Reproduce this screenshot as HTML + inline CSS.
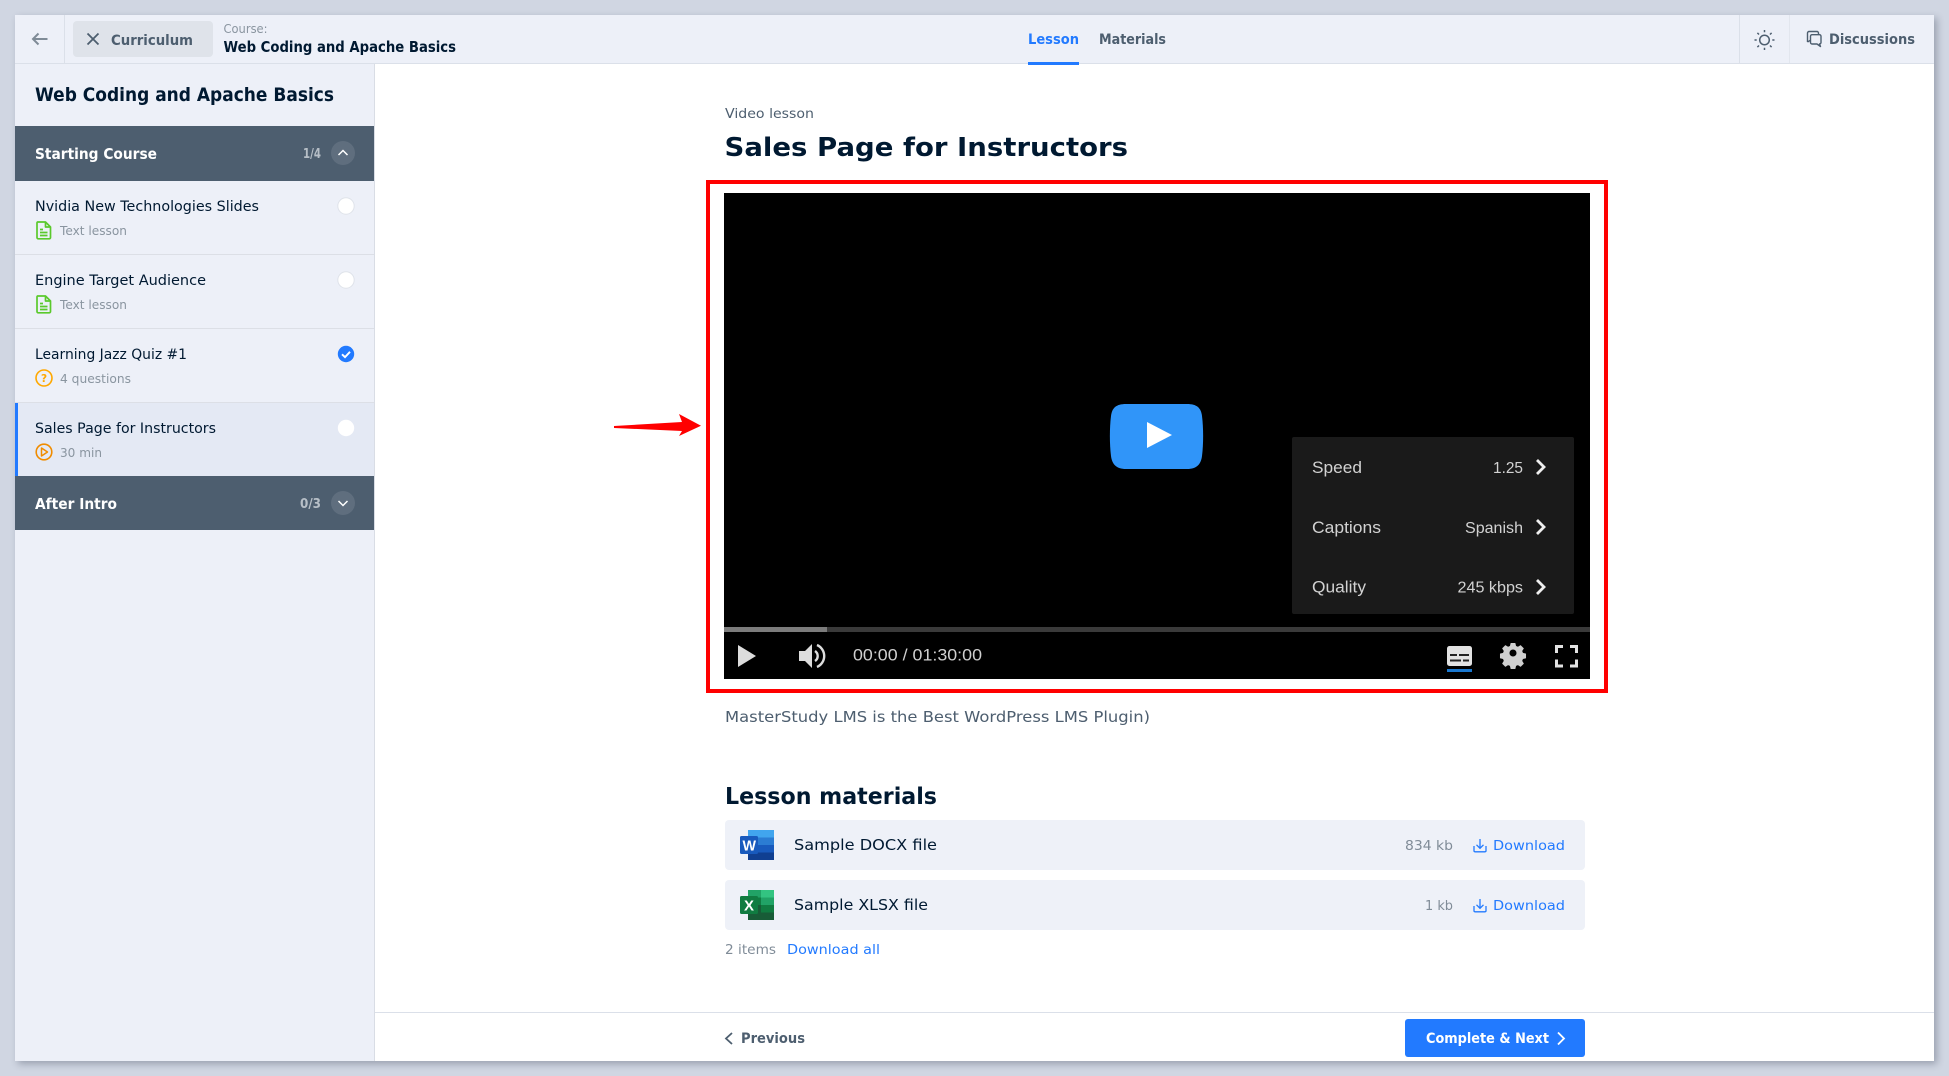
<!DOCTYPE html>
<html lang="en">
<head>
<meta charset="utf-8">
<title>Sales Page for Instructors</title>
<style>
html,body{margin:0;padding:0;width:1949px;height:1076px;overflow:hidden;background:#d0d6e2}
#app{position:absolute;left:15px;top:15px;width:1919px;height:1046px;background:#fff;box-shadow:3px 3px 7px rgba(40,50,70,.32)}
svg{position:absolute;left:0;top:0}
text{font-family:"DejaVu Sans","Liberation Sans",sans-serif;white-space:pre}
.b{font-weight:700}
.v{font-family:"Liberation Sans",sans-serif}
</style>
</head>
<body>
<div id="app"></div>
<svg width="1949" height="1076" viewBox="0 0 1949 1076" xmlns="http://www.w3.org/2000/svg">
<!-- header -->
<rect x="15" y="15" width="1919" height="48" fill="#edf0f8"/>
<rect x="15" y="63" width="1919" height="1" fill="#dbe0e9"/>
<rect x="64" y="15" width="1" height="48" fill="#dbe0e9"/>
<path d="M47.500 39H33M38.500 33.500L33 39L38.500 44.500" fill="none" stroke="#7f8b97" stroke-width="2"/>
<rect x="73" y="21" width="140" height="36" rx="4" fill="#dfe3ea"/>
<path d="M87.500 33.500L98.500 44.500M98.500 33.500L87.500 44.500" stroke="#4d5e6f" stroke-width="1.800" fill="none"/>
<text x="111" y="45" font-size="14.500" class="b" fill="#4d5e6f" textLength="82" lengthAdjust="spacingAndGlyphs">Curriculum</text>
<text x="223.500" y="33" font-size="12.500" fill="#8a95a0" textLength="44" lengthAdjust="spacingAndGlyphs">Course:</text>
<text x="223.500" y="52" font-size="15" class="b" fill="#001931" textLength="232.500" lengthAdjust="spacingAndGlyphs">Web Coding and Apache Basics</text>
<text x="1028" y="44" font-size="14.500" class="b" fill="#227aff" textLength="51" lengthAdjust="spacingAndGlyphs">Lesson</text>
<rect x="1028" y="62" width="51" height="3" fill="#227aff"/>
<text x="1099" y="44" font-size="14.500" class="b" fill="#4d5e6f" textLength="67" lengthAdjust="spacingAndGlyphs">Materials</text>
<rect x="1739" y="15" width="1" height="48" fill="#dbe0e9"/>
<rect x="1789" y="15" width="1" height="48" fill="#e2e6ee"/>
<g fill="none" stroke="#4d5e6f" stroke-width="1.500">
<circle cx="1764.500" cy="40" r="4.800"/>
<path d="M1764.500 30v2.200M1764.500 47.800v2.200M1754.500 40h2.200M1772.300 40h2.200M1757.400 32.900l1.600 1.600M1770 45.500l1.600 1.600M1771.600 32.900l-1.600 1.600M1759 45.500l-1.600 1.600"/>
</g>
<g fill="none" stroke="#4d5e6f" stroke-width="1.400" stroke-linejoin="round">
<path d="M1807.500 42V33a1.500 1.500 0 0 1 1.500-1.500h8a1.500 1.500 0 0 1 1.500 1.500v1.500"/>
<path d="M1812 34.700h7.500a1.500 1.500 0 0 1 1.500 1.500v6.300a1.500 1.500 0 0 1-1.500 1.500v0l1 2.500-3.500-2.500H1812a1.500 1.500 0 0 1-1.500-1.500v-6.300a1.500 1.500 0 0 1 1.500-1.500z"/>
<path d="M1807.500 42l3-1.800"/>
</g>
<text x="1829" y="44" font-size="14.500" class="b" fill="#4d5e6f" textLength="86" lengthAdjust="spacingAndGlyphs">Discussions</text>

<!-- sidebar -->
<rect x="15" y="64" width="359" height="997" fill="#edf0f8"/>
<rect x="374" y="64" width="1" height="997" fill="#d9dde5"/>
<text x="35" y="101" font-size="19" class="b" fill="#001931" textLength="299" lengthAdjust="spacingAndGlyphs">Web Coding and Apache Basics</text>

<rect x="15" y="126" width="359" height="55" fill="#4d5e6f"/>
<text x="35" y="159" font-size="15" class="b" fill="#fff" textLength="122" lengthAdjust="spacingAndGlyphs">Starting Course</text>
<text x="303" y="158" font-size="13.500" class="b" fill="#b7bfc7" textLength="18" lengthAdjust="spacingAndGlyphs">1/4</text>
<circle cx="343" cy="153" r="12" fill="#5f6e7e"/>
<path d="M338.500 155l4.500-4.500 4.500 4.500" fill="none" stroke="#fff" stroke-width="1.500"/>

<rect x="15" y="254" width="359" height="1" fill="#dcdfe6"/>
<rect x="15" y="328" width="359" height="1" fill="#dcdfe6"/>
<rect x="15" y="402" width="359" height="1" fill="#dcdfe6"/>

<!-- item 1 -->
<text x="35" y="211" font-size="14.500" fill="#001931" textLength="224" lengthAdjust="spacingAndGlyphs">Nvidia New Technologies Slides</text>
<circle cx="346" cy="206" r="8.200" fill="#fff" stroke="#dfe3ea" stroke-width="1"/>
<g fill="none" stroke="#5ac92c" stroke-width="1.700" stroke-linejoin="round">
<path d="M37.500 222h8l5 5v10.500a1.300 1.300 0 0 1-1.300 1.300H38.300a1.300 1.300 0 0 1-1.300-1.300V223a1 1 0 0 1 .5-1z"/>
<path d="M45.500 222v5h5M40 229.500h3M40 232.500h7.500M40 235.500h7.500"/>
</g>
<text x="60" y="235" font-size="12.500" fill="#8a95a0" textLength="67" lengthAdjust="spacingAndGlyphs">Text lesson</text>

<!-- item 2 -->
<text x="35" y="285" font-size="14.500" fill="#001931" textLength="171" lengthAdjust="spacingAndGlyphs">Engine Target Audience</text>
<circle cx="346" cy="280" r="8.200" fill="#fff" stroke="#dfe3ea" stroke-width="1"/>
<g fill="none" stroke="#5ac92c" stroke-width="1.700" stroke-linejoin="round" transform="translate(0 74)">
<path d="M37.500 222h8l5 5v10.500a1.300 1.300 0 0 1-1.300 1.300H38.300a1.300 1.300 0 0 1-1.300-1.300V223a1 1 0 0 1 .5-1z"/>
<path d="M45.500 222v5h5M40 229.500h3M40 232.500h7.500M40 235.500h7.500"/>
</g>
<text x="60" y="309" font-size="12.500" fill="#8a95a0" textLength="67" lengthAdjust="spacingAndGlyphs">Text lesson</text>

<!-- item 3 -->
<text x="35" y="359" font-size="14.500" fill="#001931" textLength="152" lengthAdjust="spacingAndGlyphs">Learning Jazz Quiz #1</text>
<circle cx="346" cy="354" r="8.200" fill="#227aff"/>
<path d="M342 354.300l3 2.800 5-5.300" fill="none" stroke="#fff" stroke-width="1.900"/>
<circle cx="44" cy="378" r="8" fill="none" stroke="#ffa800" stroke-width="1.600"/>
<text x="41" y="382" font-size="10.500" class="b" fill="#ffa800">?</text>
<text x="60" y="383" font-size="12.500" fill="#8a95a0" textLength="71" lengthAdjust="spacingAndGlyphs">4 questions</text>

<!-- item 4 -->
<rect x="15" y="403" width="359" height="73" fill="#e4e9f4"/>
<rect x="15" y="403" width="3" height="73" fill="#227aff"/>
<text x="35" y="433" font-size="14.500" fill="#001931" textLength="181" lengthAdjust="spacingAndGlyphs">Sales Page for Instructors</text>
<circle cx="346" cy="428" r="8.200" fill="#fff"/>
<circle cx="44" cy="452" r="7.800" fill="none" stroke="#f08c00" stroke-width="1.600"/>
<path d="M41.500 448l6 4-6 4z" fill="none" stroke="#f08c00" stroke-width="1.500" stroke-linejoin="round"/>
<text x="60" y="457" font-size="12.500" fill="#8a95a0" textLength="42" lengthAdjust="spacingAndGlyphs">30 min</text>

<rect x="15" y="476" width="359" height="54" fill="#4d5e6f"/>
<text x="35" y="509" font-size="15" class="b" fill="#fff" textLength="82" lengthAdjust="spacingAndGlyphs">After Intro</text>
<text x="300" y="508" font-size="13.500" class="b" fill="#b7bfc7" textLength="21" lengthAdjust="spacingAndGlyphs">0/3</text>
<circle cx="343" cy="503" r="12" fill="#5f6e7e"/>
<path d="M338.500 501l4.500 4.500 4.500-4.500" fill="none" stroke="#fff" stroke-width="1.500"/>

<!-- main -->
<text x="725" y="118" font-size="13.500" fill="#4d5e6f" textLength="89" lengthAdjust="spacingAndGlyphs">Video lesson</text>
<text x="724.500" y="156" font-size="25.500" class="b" fill="#001931" textLength="403.500" lengthAdjust="spacingAndGlyphs">Sales Page for Instructors</text>

<!-- arrow -->
<path d="M614 426L682 422L679 414L701 425.700L679 436L682 431L614 428Z" fill="#f00"/>
<!-- frame -->
<rect x="708" y="182" width="898" height="509" fill="none" stroke="#f00" stroke-width="4"/>
<!-- video -->
<rect x="724" y="193" width="866" height="486" fill="#000"/>
<path d="M1126 404H1187C1197 404 1201 408 1202 416C1203.500 428 1203.500 444 1202 456C1201 464 1197 469 1187 469H1126C1116 469 1112 464 1111 456C1109.500 444 1109.500 428 1111 416C1112 408 1116 404 1126 404Z" fill="#3095f9"/>
<path d="M1147 422L1172 435L1147 448Z" fill="#fff"/>
<rect x="1292" y="437" width="282" height="177" rx="2" fill="#1a1a1a"/>
<g fill="#d2d2d2" font-size="17">
<text class="v" x="1312" y="473" textLength="50" lengthAdjust="spacingAndGlyphs">Speed</text>
<text class="v" x="1312" y="533" textLength="69" lengthAdjust="spacingAndGlyphs">Captions</text>
<text class="v" x="1312" y="592.500" textLength="54" lengthAdjust="spacingAndGlyphs">Quality</text>
<text class="v" x="1493" y="473" font-size="16" textLength="30" lengthAdjust="spacingAndGlyphs">1.25</text>
<text class="v" x="1465" y="533" font-size="16" textLength="58" lengthAdjust="spacingAndGlyphs">Spanish</text>
<text class="v" x="1457.500" y="592.500" font-size="16" textLength="65.500" lengthAdjust="spacingAndGlyphs">245 kbps</text>
</g>
<g fill="none" stroke="#eee" stroke-width="2.800">
<path d="M1537 460l7 7-7 7M1537 520l7 7-7 7M1537 580l7 7-7 7"/>
</g>
<rect x="724" y="627" width="866" height="5" fill="#3a3a3a"/>
<rect x="724" y="627" width="103" height="5" fill="#7c7c7c"/>
<path d="M738 645L756 656L738 667Z" fill="#ddd"/>
<path d="M799 651h6l7-7v24l-7-7h-6z" fill="#ddd"/>
<path d="M815 651a6 6 0 0 1 0 10M817 645a12 12 0 0 1 0 22" fill="none" stroke="#ddd" stroke-width="2.400"/>
<text class="v" x="853" y="660.500" font-size="17" fill="#cfcfcf" textLength="129" lengthAdjust="spacingAndGlyphs">00:00 / 01:30:00</text>
<rect x="1447" y="646" width="25" height="20" rx="2.500" fill="#e2e2e2"/>
<path d="M1450 655h7M1459 655h10M1450 660.500h11M1463 660.500h6" stroke="#222" stroke-width="2"/>
<rect x="1447" y="669" width="25" height="3" fill="#1a78d0"/>
<g fill="#cfcfcf">
<path fill-rule="evenodd" d="M1510.500 645.500h5l.8 3.300 2 .8 2.900-1.800 3.500 3.500-1.800 2.900.8 2 3.300.8v5l-3.300.8-.8 2 1.800 2.900-3.500 3.500-2.900-1.800-2 .8-.8 3.300h-5l-.8-3.300-2-.8-2.900 1.800-3.500-3.500 1.800-2.900-.8-2-3.300-.8v-5l3.300-.8.800-2-1.800-2.900 3.500-3.500 2.900 1.800 2-.8z M1513 652.500a3.800 3.800 0 1 0 0 7.600a3.800 3.800 0 1 0 0-7.600z" transform="translate(0 -.5) translate(1513 656) scale(.93) translate(-1513 -659)"/>
</g>
<path d="M1556.500 653v-6.500h6.500M1570 646.500h6.500v6.500M1576.500 659.500v6.500h-6.500M1563 666h-6.500v-6.500" fill="none" stroke="#e2e2e2" stroke-width="3"/>

<text x="725" y="722" font-size="15.500" fill="#4d5e6f" textLength="425" lengthAdjust="spacingAndGlyphs">MasterStudy LMS is the Best WordPress LMS Plugin)</text>
<text x="725" y="804" font-size="23.500" class="b" fill="#001931" textLength="212" lengthAdjust="spacingAndGlyphs">Lesson materials</text>

<!-- material rows -->
<rect x="725" y="820" width="860" height="50" rx="4" fill="#eef1f8"/>
<rect x="725" y="880" width="860" height="50" rx="4" fill="#eef1f8"/>

<!-- word icon -->
<rect x="748" y="830" width="26" height="8" fill="#41a5ee"/>
<rect x="748" y="837.500" width="26" height="7.500" fill="#2b7cd3"/>
<rect x="748" y="845" width="26" height="7.500" fill="#185abd"/>
<rect x="748" y="852.500" width="26" height="7.500" fill="#103f91"/>
<rect x="740" y="836" width="18" height="18" rx="1.500" fill="#185abd"/>
<text class="v b" x="742.500" y="850.500" font-size="15" fill="#fff" textLength="13.500" lengthAdjust="spacingAndGlyphs">W</text>
<text x="794" y="850" font-size="15.500" fill="#001931" textLength="143" lengthAdjust="spacingAndGlyphs">Sample DOCX file</text>

<!-- excel icon -->
<rect x="748" y="890" width="13" height="8" fill="#21a366"/>
<rect x="761" y="890" width="13" height="8" fill="#33c481"/>
<rect x="748" y="897.500" width="13" height="7.500" fill="#107c41"/>
<rect x="761" y="897.500" width="13" height="7.500" fill="#21a366"/>
<rect x="748" y="905" width="13" height="7.500" fill="#185c37"/>
<rect x="761" y="905" width="13" height="7.500" fill="#107c41"/>
<rect x="748" y="912.500" width="26" height="7.500" fill="#185c37"/>
<rect x="740" y="896" width="18" height="18" rx="1.500" fill="#107c41"/>
<text class="v b" x="744" y="910.500" font-size="15" fill="#fff" textLength="10" lengthAdjust="spacingAndGlyphs">X</text>
<text x="794" y="910" font-size="15.500" fill="#001931" textLength="134" lengthAdjust="spacingAndGlyphs">Sample XLSX file</text>

<text x="1405" y="850" font-size="13.500" fill="#808c98" textLength="48" lengthAdjust="spacingAndGlyphs">834 kb</text>
<text x="1425" y="910" font-size="13.500" fill="#808c98" textLength="28" lengthAdjust="spacingAndGlyphs">1 kb</text>
<g fill="none" stroke="#227aff" stroke-width="1.300">
<path d="M1480 839v9M1476.500 844.800l3.500 3.500 3.500-3.500M1474 846v4.800a1 1 0 0 0 1 1h10a1 1 0 0 0 1-1V846"/>
<path d="M1480 899v9M1476.500 904.800l3.500 3.500 3.500-3.500M1474 906v4.800a1 1 0 0 0 1 1h10a1 1 0 0 0 1-1V906"/>
</g>
<text x="1493" y="850" font-size="13.500" fill="#227aff" textLength="72" lengthAdjust="spacingAndGlyphs">Download</text>
<text x="1493" y="910" font-size="13.500" fill="#227aff" textLength="72" lengthAdjust="spacingAndGlyphs">Download</text>

<text x="725" y="954" font-size="13.500" fill="#808c98" textLength="51" lengthAdjust="spacingAndGlyphs">2 items</text>
<text x="787" y="954" font-size="13.500" fill="#227aff" textLength="93" lengthAdjust="spacingAndGlyphs">Download all</text>

<!-- footer -->
<rect x="375" y="1012" width="1559" height="1" fill="#dbe0e9"/>
<path d="M732 1033l-6 5.500 6 5.500" fill="none" stroke="#4d5e6f" stroke-width="1.800"/>
<text x="741" y="1043" font-size="14" class="b" fill="#4d5e6f" textLength="64" lengthAdjust="spacingAndGlyphs">Previous</text>
<rect x="1405" y="1019" width="180" height="38" rx="3" fill="#227aff"/>
<text x="1426" y="1043" font-size="14" class="b" fill="#fff" textLength="123" lengthAdjust="spacingAndGlyphs">Complete &amp; Next</text>
<path d="M1558 1032.500l6 6-6 6" fill="none" stroke="#fff" stroke-width="1.800"/>
</svg>
</body>
</html>
